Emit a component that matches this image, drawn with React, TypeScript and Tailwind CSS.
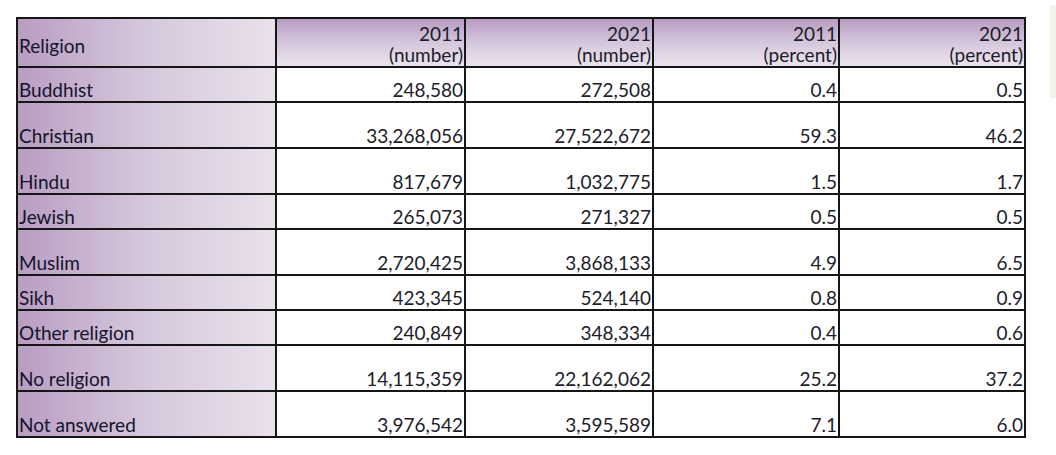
const rows: { name: string; tall: boolean; v: [string, string, string, string] }[] = [
  { name: "Buddhist", tall: false, v: ["248,580", "272,508", "0.4", "0.5"] },
  { name: "Christian", tall: true, v: ["33,268,056", "27,522,672", "59.3", "46.2"] },
  { name: "Hindu", tall: true, v: ["817,679", "1,032,775", "1.5", "1.7"] },
  { name: "Jewish", tall: false, v: ["265,073", "271,327", "0.5", "0.5"] },
  { name: "Muslim", tall: true, v: ["2,720,425", "3,868,133", "4.9", "6.5"] },
  { name: "Sikh", tall: false, v: ["423,345", "524,140", "0.8", "0.9"] },
  { name: "Other religion", tall: false, v: ["240,849", "348,334", "0.4", "0.6"] },
  { name: "No religion", tall: true, v: ["14,115,359", "22,162,062", "25.2", "37.2"] },
  { name: "Not answered", tall: true, v: ["3,976,542", "3,595,589", "7.1", "6.0"] },
];

const heads = [
  ["2011", "(number)"],
  ["2021", "(number)"],
  ["2011", "(percent)"],
  ["2021", "(percent)"],
];

const widths = ["w-[259px]", "w-[189px]", "w-[188px]", "w-[186px]", "w-[186px]"];

export default function App() {
  return (
    <div className="relative w-[1056px] h-[455px] bg-white overflow-hidden font-['Lato',sans-serif] text-[#1c1c2a]">
      <div className="absolute right-0 top-[5px] w-[6px] h-[93px] bg-[#f3f5ea]" />
      <div className="pt-[17px] pl-[16px]">
        <table className="border-collapse table-fixed text-[19px] leading-[20px]">
          <colgroup>
            {widths.map((w, i) => (
              <col key={i} className={w} />
            ))}
          </colgroup>
          <thead>
            <tr className="h-[49px]">
              <th className="border-2 border-[#161616] align-bottom text-left font-normal px-[1px] pb-[1px] bg-gradient-to-r from-[#b99dc2] via-[#d6c8dc] to-[#e9e1ec]">
                <div className="pb-[9px] text-[#14142c]">Religion</div>
              </th>
              {heads.map((h, i) => (
                <th
                  key={i}
                  className="border-2 border-[#161616] align-bottom text-right font-normal px-[1px] pb-[1px] bg-gradient-to-b from-[#b89bc1] via-[#d5c7dc] to-[#ebe3ee]"
                >
                  <div className="leading-[22px]">{h[0]}</div>
                  <div className="leading-[20px]">{h[1]}</div>
                </th>
              ))}
            </tr>
          </thead>
          <tbody>
            {rows.map((r) => (
              <tr key={r.name} className={r.tall ? "h-[46px]" : "h-[35px]"}>
                <td className="border-2 border-[#161616] align-bottom text-left px-[1px] pb-[1px] bg-gradient-to-r from-[#b99dc2] via-[#d6c8dc] to-[#e9e1ec] text-[#14142c]">
                  {r.name}
                </td>
                {r.v.map((x, i) => (
                  <td key={i} className="border-2 border-[#161616] align-bottom text-right px-[1px] pb-[1px]">
                    {x}
                  </td>
                ))}
              </tr>
            ))}
          </tbody>
        </table>
      </div>
    </div>
  );
}
